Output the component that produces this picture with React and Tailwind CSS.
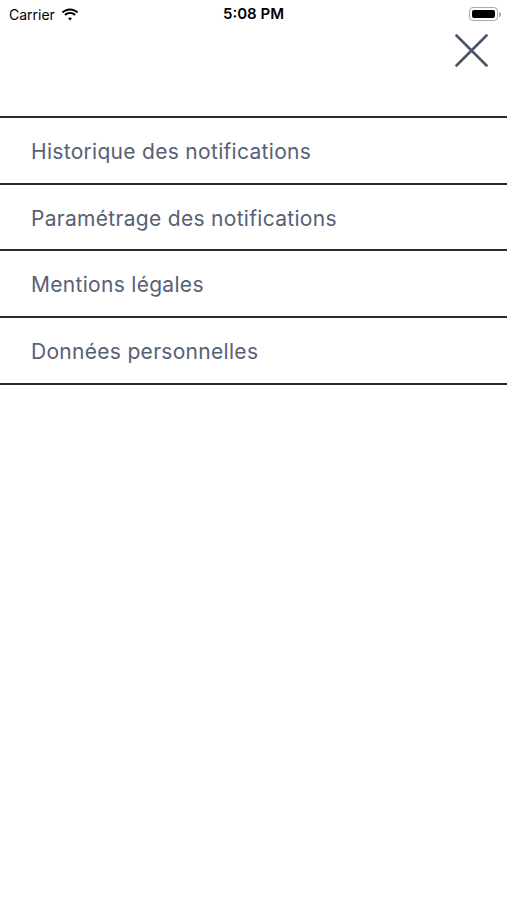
import React from "react";

const ITEMS = [
  "Historique des notifications",
  "Paramétrage des notifications",
  "Mentions légales",
  "Données personnelles",
];

const StatusBar = () => (
  <div className="relative h-[28px] flex items-center justify-between pl-[9px] pr-[6px] text-black">
    <div className="flex items-center gap-[6px] text-[14px] font-['Inter',sans-serif]">
      <span>Carrier</span>
      <svg width="18" height="13" viewBox="0 0 17 12" fill="black">
        <path d="M8.5 2.2c2.5 0 4.8 1 6.5 2.6l1.3-1.4C14.3 1.5 11.5.3 8.5.3S2.7 1.5.7 3.4L2 4.8c1.7-1.6 4-2.6 6.5-2.6z" />
        <path d="M8.5 5.6c1.6 0 3 .6 4.1 1.6l1.3-1.4C12.5 4.5 10.6 3.7 8.5 3.7S4.5 4.5 3.1 5.8l1.3 1.4c1.1-1 2.5-1.6 4.1-1.6z" />
        <path d="M8.5 8.9c.7 0 1.3.3 1.8.7L8.5 11.6 6.7 9.6c.5-.4 1.1-.7 1.8-.7z" />
      </svg>
    </div>
    <span className="absolute left-1/2 -translate-x-1/2 text-[15px] font-semibold font-['Inter',sans-serif]">
      5:08 PM
    </span>
    <div className="flex items-center">
      <div className="w-[29px] h-[14px] rounded-[4px] border border-[#aaa] p-[2px]">
        <div className="w-full h-full rounded-[2px] bg-black" />
      </div>
      <div className="w-[2px] h-[5px] bg-[#aaa] rounded-r-sm ml-[1px]" />
    </div>
  </div>
);

export default function App() {
  return (
    <div className="w-[507px] h-[900px] bg-white overflow-hidden font-['Inter',sans-serif]">
      <StatusBar />
      <div className="flex justify-end pr-[19px] pt-[6px] h-[88px]">
        <button className="w-[33px] h-[33px]">
          <svg width="33" height="33" viewBox="0 0 33 33" fill="none" stroke="#4a5568" strokeWidth="2.6" strokeLinecap="round">
            <path d="M1.5 1.5L31.5 31.5M31.5 1.5L1.5 31.5" />
          </svg>
        </button>
      </div>
      <div className="border-t-2 border-[#2a2a2a]">
        {ITEMS.map((item) => (
          <div
            key={item}
            className="h-[66.7px] flex items-center pl-[31px] pt-[3px] border-b-2 border-[#2a2a2a] text-[21px] tracking-[0.3px] text-[#566176]"
          >
            {item}
          </div>
        ))}
      </div>
    </div>
  );
}
